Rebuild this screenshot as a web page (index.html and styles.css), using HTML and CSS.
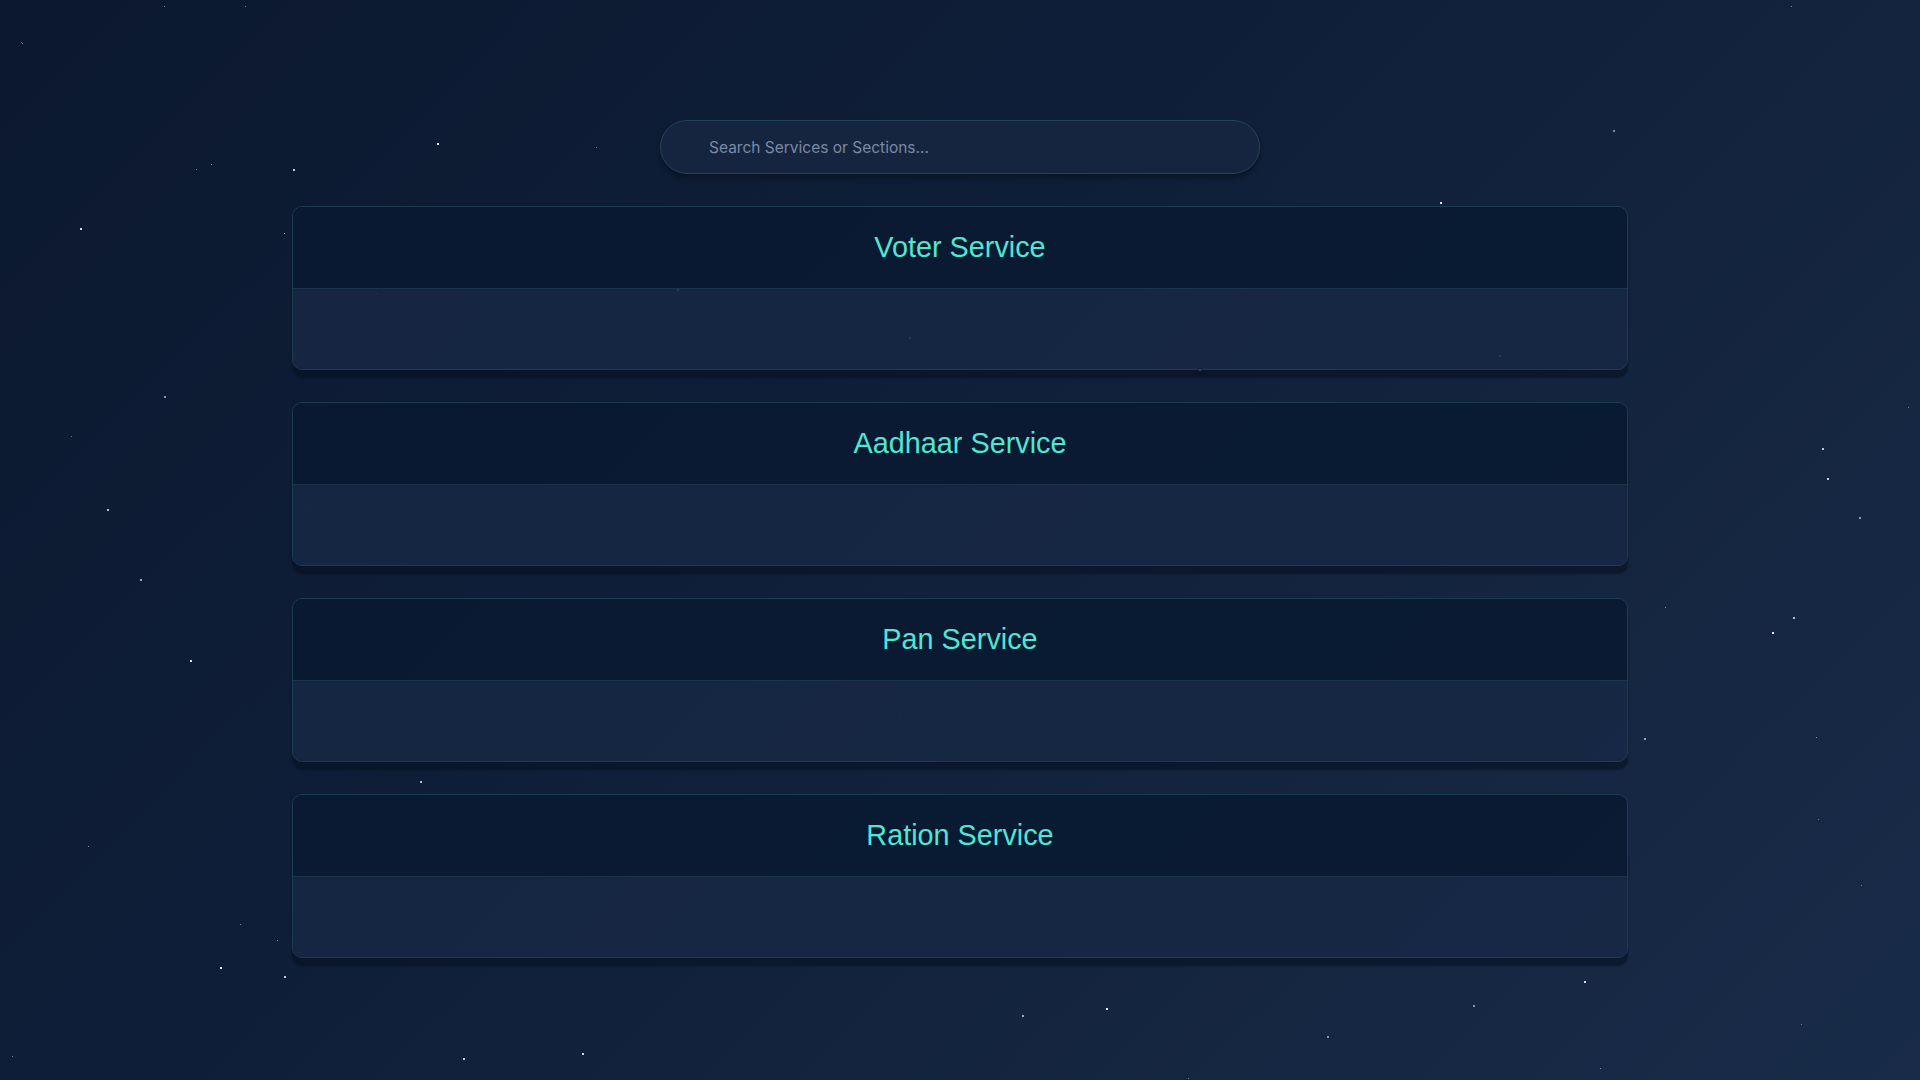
FILE: index.html
```html
<!DOCTYPE html>
<html lang="en">
<head>
<meta charset="utf-8">
<title>Services</title>
<link rel="stylesheet" href="styles.css">
</head>
<body>
<div class="stars stars-small"></div>
<div class="stars stars-big"></div>
<main class="page">
  <div class="search-wrap">
    <input class="search" type="text" placeholder="Search Services or Sections...">
  </div>
  <section class="cards">
    <article class="card">
      <header class="card-head"><h2 class="card-title">Voter Service</h2></header>
      <div class="card-body"></div>
    </article>
    <article class="card">
      <header class="card-head"><h2 class="card-title">Aadhaar Service</h2></header>
      <div class="card-body"></div>
    </article>
    <article class="card">
      <header class="card-head"><h2 class="card-title">Pan Service</h2></header>
      <div class="card-body"></div>
    </article>
    <article class="card">
      <header class="card-head"><h2 class="card-title">Ration Service</h2></header>
      <div class="card-body"></div>
    </article>
  </section>
</main>
</body>
</html>
```

FILE: styles.css
```css
* { box-sizing: border-box; }

html, body {
  margin: 0;
  height: 100%;
}

body {
  min-height: 100vh;
  background: linear-gradient(135deg, #0b182f 0%, #0f1e38 40%, #152641 75%, #182b48 100%);
  font-family: "Liberation Sans", Arial, sans-serif;
  overflow: hidden;
  position: relative;
}

.stars {
  position: absolute;
  top: 0;
  left: 0;
  pointer-events: none;
}

.stars-big {
  width: 2px;
  height: 2px;
  background: transparent;
  box-shadow:
    437px 143px #e8eef8, 80px 228px #cfd8e6, 164px 396px #8c98ad, 107px 509px #b5c0d2,
    140px 579px #9aa6ba, 190px 660px #e0e7f2, 220px 967px #e8eef8, 284px 976px #c2ccdc,
    1440px 202px #d8e0ec, 1822px 448px #b8c3d4, 1827px 478px #c8d1df, 1859px 517px #8f9bb0,
    1772px 632px #e8eef8, 1793px 617px #b0bbcc, 1584px 981px #d8e0ec, 1106px 1008px #e8eef8,
    582px 1053px #d0d8e6, 1022px 1015px #9aa6ba, 1327px 1036px #8894a8, 1473px 1005px #8894a8,
    293px 169px #c6cfdd, 1613px 130px #7d899e, 677px 289px #8894a8, 1499px 355px #8894a8,
    909px 337px #7d899e, 1199px 369px #8894a8, 420px 781px #b0bbcc, 463px 1058px #c2ccdc,
    1644px 738px #98a4b8;
}

.stars-small {
  width: 1px;
  height: 1px;
  background: transparent;
  box-shadow:
    88px 846px #7d899e, 1665px 607px #7d899e, 1816px 737px #7d899e, 1801px 1024px #6f7b90,
    1861px 885px #6f7b90, 1908px 407px #6f7b90, 1791px 6px #6f7b90, 245px 6px #6f7b90,
    164px 6px #6f7b90, 22px 43px #6f7b90, 211px 164px #7d899e, 196px 169px #6f7b90,
    284px 233px #9aa6ba, 596px 147px #6f7b90, 1090px 122px #6f7b90, 376px 293px #6f7b90,
    716px 403px #5d6a80, 899px 718px #5d6a80, 665px 737px #5d6a80, 1105px 698px #5d6a80,
    1445px 561px #5d6a80, 306px 507px #5d6a80, 1589px 447px #5d6a80, 1248px 137px #6f7b90,
    277px 940px #7d899e, 240px 924px #6f7b90, 12px 1056px #6f7b90, 1188px 1078px #6f7b90,
    71px 436px #5d6a80, 1818px 819px #6f7b90, 1600px 1068px #7d899e, 21px 42px #5d6a80,
    1232px 248px #4f5c72;
}

.page {
  position: relative;
  z-index: 1;
  display: flex;
  flex-direction: column;
  align-items: center;
  padding-top: 120px;
  gap: 32px;
}

.search-wrap {
  width: 600px;
}

.search {
  display: block;
  width: 100%;
  height: 54px;
  border-radius: 27px;
  border: 1px solid #1f4658;
  background: #15253f;
  box-shadow: 0 4px 4px rgba(5, 12, 26, 0.55);
  padding: 0 20px 0 48px;
  font-family: Inter, "Noto Sans", sans-serif;
  font-size: 15.5px;
  color: #c8d2e4;
  outline: none;
}

.search::placeholder {
  color: #7b89a4;
}

.cards {
  width: 1336px;
  display: flex;
  flex-direction: column;
  gap: 32px;
}

.card {
  border: 1px solid #1c3c51;
  border-radius: 10px;
  overflow: hidden;
  box-shadow: 0 8px 2px rgba(6, 14, 30, 0.55);
}

.card-head {
  height: 82px;
  display: flex;
  align-items: center;
  justify-content: center;
  background: rgba(9, 25, 50, 0.9);
  border-bottom: 1px solid #1a344a;
}

.card-title {
  margin: 0;
  font-family: "Liberation Sans", Arial, sans-serif;
  font-weight: 400;
  font-size: 28.8px;
  color: #4fe6d3;
  line-height: 1;
  padding-bottom: 1px;
}

.card-body {
  height: 80px;
  background: rgba(23, 40, 70, 0.82);
}
```
